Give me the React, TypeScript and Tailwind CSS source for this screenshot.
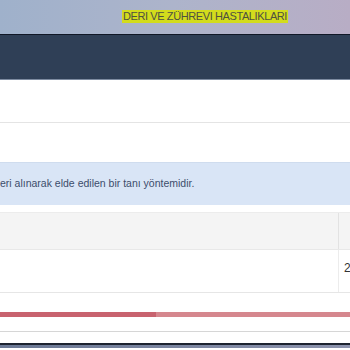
export default function App() {
  return (
    <div className="w-[350px] h-[350px] overflow-hidden bg-white font-['Liberation_Sans',Arial,sans-serif]">
      {/* top banner */}
      <div className="h-[34px] bg-gradient-to-r from-[#9fb1cb] via-[#adb4cb] to-[#b8adc5] flex items-start pt-[10px] pl-[122px]">
        <span className="bg-[#d3dc1c] text-[#4f5040] text-[11px] leading-[13px] px-[1px] tracking-[-0.4px]">
          DERI VE ZÜHREVI HASTALIKLARI
        </span>
      </div>
      {/* nav bar */}
      <div className="h-[46px] bg-[#2f3f56] border-t border-[#111827] border-b border-b-[#7d8ba0]" />
      {/* blank area */}
      <div className="h-[43px] border-b border-[#e4e4e4]" />
      <div className="h-[39px]" />
      {/* info alert */}
      <div className="h-[43px] bg-[#d9e5f6] border-t border-[#cfdcee] flex items-center text-[10.5px] text-[#3c4d6b]">
        eri alınarak elde edilen bir tanı yöntemidir.
      </div>
      <div className="h-[7px]" />
      {/* table */}
      <div className="flex h-[38px] bg-[#f4f4f4] border-t border-[#ececec] border-b border-b-[#e8e8e8]">
        <div className="flex-1" />
        <div className="w-[12px] border-l border-[#e2e2e2]" />
      </div>
      <div className="flex h-[43px] border-b border-[#e6e6e6]">
        <div className="flex-1" />
        <div className="w-[12px] border-l border-[#ececec] pl-[5px] pt-[9px] text-[12px] text-[#333]">2</div>
      </div>
      <div className="h-[19px]" />
      {/* progress */}
      <div className="flex h-[5px]">
        <div className="w-[156px] bg-[#c8636f]" />
        <div className="flex-1 bg-[#d5878e]" />
      </div>
      <div className="h-[15px] border-b border-[#d6d6d6]" />
      <div className="h-[11px]" />
      <div className="h-[5px] border-t-2 border-[#1d2330] bg-gradient-to-r from-[#6a7894] to-[#8c93ad]" />
    </div>
  );
}
